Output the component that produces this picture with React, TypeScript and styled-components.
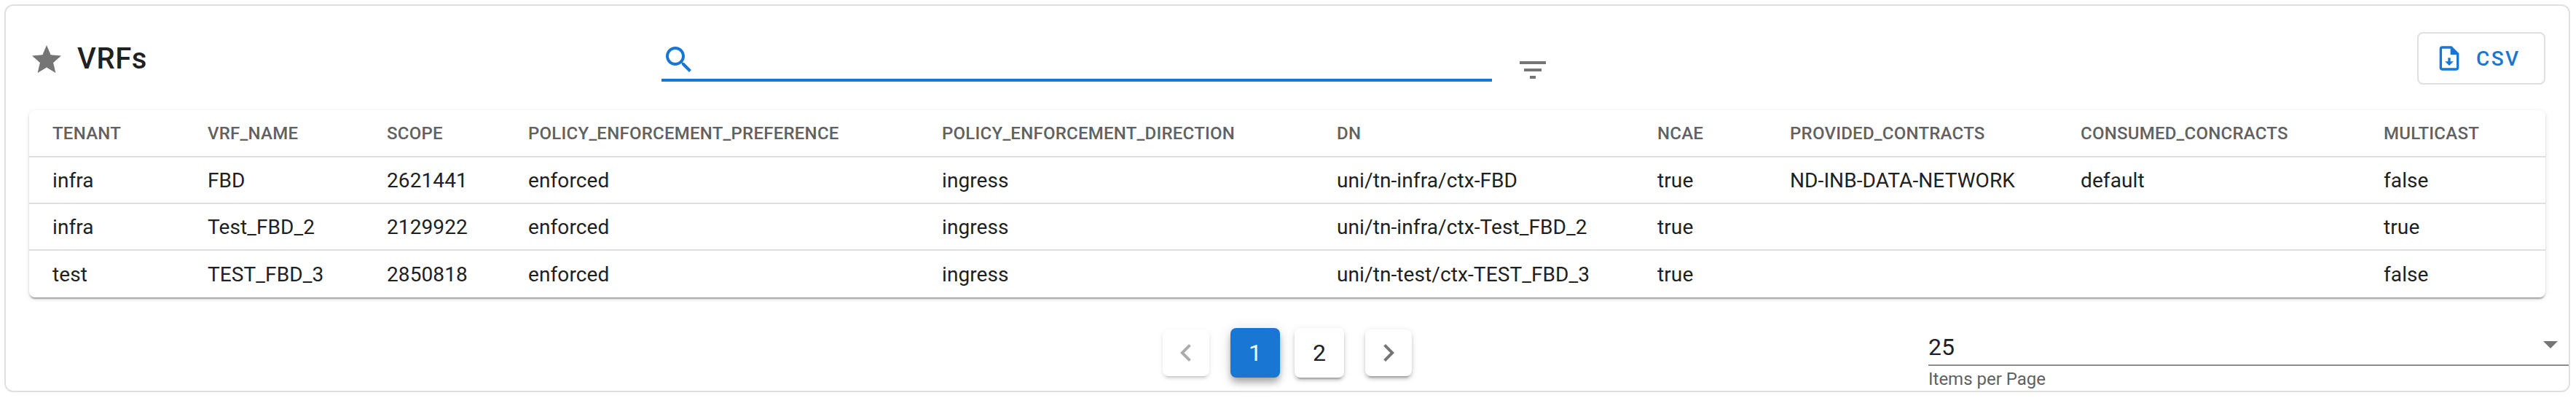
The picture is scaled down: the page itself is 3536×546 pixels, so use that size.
import React from "react";
import styled, { createGlobalStyle } from "styled-components";

const Global = createGlobalStyle`
  html, body { margin: 0; padding: 0; background: #fff; }
  body { font-family: Roboto, "Liberation Sans", sans-serif; color: #212121; }
`;

const Page = styled.div`
  box-sizing: border-box;
  width: 3536px;
  height: 546px;
  padding: 6px 8px 8px 6px;
  overflow: hidden;
`;

const Card = styled.section`
  box-sizing: border-box;
  height: 532px;
  border: 2px solid #e0e0e0;
  border-radius: 12px;
  background: #fff;
  display: flex;
  flex-direction: column;
`;

const Toolbar = styled.header`
  box-sizing: border-box;
  height: 143px;
  padding: 36px 32px 0;
  display: flex;
  align-items: flex-start;
`;

const TitleGroup = styled.div`
  width: 868px;
  height: 48px;
  margin-top: 14px;
  display: flex;
  align-items: center;
  gap: 18px;
`;

const Title = styled.h1`
  margin: 0 0 3px;
  font-size: 40px;
  line-height: 48px;
  font-weight: 500;
  letter-spacing: 0.6px;
  color: #212121;
`;

const Search = styled.div`
  box-sizing: border-box;
  width: 1140px;
  height: 54px;
  margin-top: 14px;
  border-bottom: 4px solid #1976d2;
  display: flex;
  align-items: flex-start;
`;

const SearchIcon = styled.svg`
  width: 48px;
  height: 48px;
  fill: #1976d2;
`;

const FilterIcon = styled.svg`
  width: 48px;
  height: 48px;
  margin: 28px 0 0 32px;
  fill: #757575;
`;

const StarIcon = styled.svg`
  width: 48px;
  height: 48px;
  flex: none;
  fill: #757575;
`;

const CsvButton = styled.button`
  box-sizing: border-box;
  width: 176px;
  height: 72px;
  margin-left: auto;
  padding: 0 0 0 22px;
  border: 2px solid #e0e0e0;
  border-radius: 8px;
  background: #fff;
  color: #1976d2;
  font-family: inherit;
  font-size: 28px;
  font-weight: 500;
  letter-spacing: 2.4px;
  display: flex;
  align-items: center;
  gap: 17px;
`;

const CsvIcon = styled.svg`
  width: 40px;
  height: 40px;
  fill: #1976d2;
  flex: none;
`;

const TableWrap = styled.div`
  margin: 0 32px;
  height: 257px;
  border-radius: 8px;
  background: #fff;
  box-shadow: 0 4px 2px -2px rgba(0, 0, 0, 0.2), 0 2px 2px 0 rgba(0, 0, 0, 0.14), 0 2px 6px 0 rgba(0, 0, 0, 0.12);
  flex: none;
`;

const Table = styled.table`
  width: 100%;
  table-layout: fixed;
  border-collapse: separate;
  border-spacing: 0;
`;

const HeadCell = styled.th`
  box-sizing: border-box;
  height: 65px;
  padding: 0 0 0 32px;
  border-bottom: 2px solid #e0e0e0;
  text-align: left;
  font-size: 24px;
  font-weight: 500;
  letter-spacing: 0.24px;
  color: #616161;
  white-space: nowrap;
`;

const Cell = styled.td<{ $last: boolean }>`
  box-sizing: border-box;
  height: 64px;
  padding: 0 0 0 32px;
  border-bottom: ${(p) => (p.$last ? "none" : "2px solid #e0e0e0")};
  font-size: 28px;
  font-weight: 400;
  letter-spacing: 0.1px;
  color: #212121;
  white-space: nowrap;
`;

const Footer = styled.footer`
  flex: 1;
  display: grid;
  grid-template-columns: 1fr auto 1fr;
  align-items: start;
`;

const Pagination = styled.nav`
  grid-column: 2;
  margin-top: 42px;
  height: 68px;
  display: flex;
  align-items: center;
  gap: 20px;
`;

const NavButton = styled.button<{ $disabled?: boolean; $side: "prev" | "next" }>`
  box-sizing: border-box;
  width: 64px;
  height: 64px;
  padding: 0;
  border: none;
  border-radius: 8px;
  background: #fff;
  margin-right: ${(p) => (p.$side === "prev" ? "9px" : "0")};
  margin-left: ${(p) => (p.$side === "next" ? "9px" : "0")};
  display: flex;
  align-items: center;
  justify-content: center;
  box-shadow: 0 6px 2px -4px rgba(0, 0, 0, ${(p) => (p.$disabled ? 0.1 : 0.2)}),
    0 4px 4px 0 rgba(0, 0, 0, ${(p) => (p.$disabled ? 0.07 : 0.14)}),
    0 2px 10px 0 rgba(0, 0, 0, ${(p) => (p.$disabled ? 0.06 : 0.12)});
  svg {
    width: 48px;
    height: 48px;
    fill: ${(p) => (p.$disabled ? "#acacac" : "#757575")};
  }
`;

const PageButton = styled.button<{ $active?: boolean }>`
  box-sizing: border-box;
  width: 68px;
  height: 68px;
  padding: 0;
  border: none;
  border-radius: 8px;
  background: ${(p) => (p.$active ? "#1976d2" : "#fff")};
  color: ${(p) => (p.$active ? "#fff" : "#212121")};
  font-family: inherit;
  font-size: 32px;
  font-weight: 400;
  box-shadow: ${(p) =>
    p.$active
      ? "0 6px 10px -2px rgba(0,0,0,0.2), 0 8px 10px 0 rgba(0,0,0,0.14), 0 2px 20px 0 rgba(0,0,0,0.12)"
      : "0 6px 2px -4px rgba(0,0,0,0.2), 0 4px 4px 0 rgba(0,0,0,0.14), 0 2px 10px 0 rgba(0,0,0,0.12)"};
`;

const SelectField = styled.div`
  grid-column: 3;
  justify-self: end;
  width: 879px;
  margin-top: 45px;
`;

const SelectValue = styled.div`
  box-sizing: border-box;
  height: 49px;
  border-bottom: 2px solid #8c8c8c;
  display: flex;
  align-items: flex-start;
  justify-content: space-between;
  font-size: 32px;
  line-height: 46px;
  color: #212121;
`;

const CaretIcon = styled.svg`
  width: 48px;
  height: 48px;
  margin: -5px 1px 0 0;
  fill: #757575;
`;

const Helper = styled.div`
  margin-top: 2px;
  font-size: 24px;
  line-height: 32px;
  color: #616161;
`;

const columns = [
  { name: "TENANT", width: 213 },
  { name: "VRF_NAME", width: 246 },
  { name: "SCOPE", width: 194 },
  { name: "POLICY_ENFORCEMENT_PREFERENCE", width: 568 },
  { name: "POLICY_ENFORCEMENT_DIRECTION", width: 542 },
  { name: "DN", width: 440 },
  { name: "NCAE", width: 182 },
  { name: "PROVIDED_CONTRACTS", width: 399 },
  { name: "CONSUMED_CONCRACTS", width: 416 },
  { name: "MULTICAST", width: 254 },
];

const rows = [
  ["infra", "FBD", "2621441", "enforced", "ingress", "uni/tn-infra/ctx-FBD", "true", "ND-INB-DATA-NETWORK", "default", "false"],
  ["infra", "Test_FBD_2", "2129922", "enforced", "ingress", "uni/tn-infra/ctx-Test_FBD_2", "true", "", "", "true"],
  ["test", "TEST_FBD_3", "2850818", "enforced", "ingress", "uni/tn-test/ctx-TEST_FBD_3", "true", "", "", "false"],
];

export default function App() {
  return (
    <Page>
      <Global />
      <Card>
        <Toolbar>
          <TitleGroup>
            <StarIcon viewBox="0 0 24 24">
              <path d="M12 17.27L18.18 21l-1.64-7.03L22 9.24l-7.19-.61L12 2 9.19 8.63 2 9.24l5.46 4.73L5.82 21z" />
            </StarIcon>
            <Title>VRFs</Title>
          </TitleGroup>
          <Search>
            <SearchIcon viewBox="0 0 24 24">
              <path d="M15.5 14h-.79l-.28-.27C15.41 12.59 16 11.11 16 9.5 16 5.91 13.09 3 9.5 3S3 5.91 3 9.5 5.91 16 9.5 16c1.61 0 3.09-.59 4.23-1.57l.27.28v.79l5 4.99L20.49 19l-4.99-5zm-6 0C7.01 14 5 11.99 5 9.5S7.01 5 9.5 5 14 7.01 14 9.5 11.99 14 9.5 14z" />
            </SearchIcon>
          </Search>
          <FilterIcon viewBox="0 0 24 24">
            <path d="M10 18h4v-2h-4v2zM3 6v2h18V6H3zm3 7h12v-2H6v2z" />
          </FilterIcon>
          <CsvButton>
            <CsvIcon viewBox="0 0 24 24">
              <path d="M14 2H6c-1.1 0-1.99.9-1.99 2L4 20c0 1.1.89 2 1.99 2H18c1.1 0 2-.9 2-2V8l-6-6zm4 18H6V4h7v5h5v11z" />
              <path d="M11 11.5h2v3h2.5L12 18l-3.5-3.5H11z" />
            </CsvIcon>
            CSV
          </CsvButton>
        </Toolbar>
        <TableWrap>
          <Table>
            <colgroup>
              {columns.map((c) => (
                <col key={c.name} width={c.width} />
              ))}
            </colgroup>
            <thead>
              <tr>
                {columns.map((c) => (
                  <HeadCell key={c.name}>{c.name}</HeadCell>
                ))}
              </tr>
            </thead>
            <tbody>
              {rows.map((r, i) => (
                <tr key={i}>
                  {r.map((v, j) => (
                    <Cell key={j} $last={i === rows.length - 1}>
                      {v}
                    </Cell>
                  ))}
                </tr>
              ))}
            </tbody>
          </Table>
        </TableWrap>
        <Footer>
          <Pagination>
            <NavButton $side="prev" $disabled>
              <svg viewBox="0 0 24 24">
                <path d="M15.41 7.41 14 6l-6 6 6 6 1.41-1.41L10.83 12z" />
              </svg>
            </NavButton>
            <PageButton $active>1</PageButton>
            <PageButton>2</PageButton>
            <NavButton $side="next">
              <svg viewBox="0 0 24 24">
                <path d="M10 6 8.59 7.41 13.17 12l-4.58 4.59L10 18l6-6z" />
              </svg>
            </NavButton>
          </Pagination>
          <SelectField>
            <SelectValue>
              25
              <CaretIcon viewBox="0 0 24 24">
                <path d="M7 10l5 5 5-5z" />
              </CaretIcon>
            </SelectValue>
            <Helper>Items per Page</Helper>
          </SelectField>
        </Footer>
      </Card>
    </Page>
  );
}
